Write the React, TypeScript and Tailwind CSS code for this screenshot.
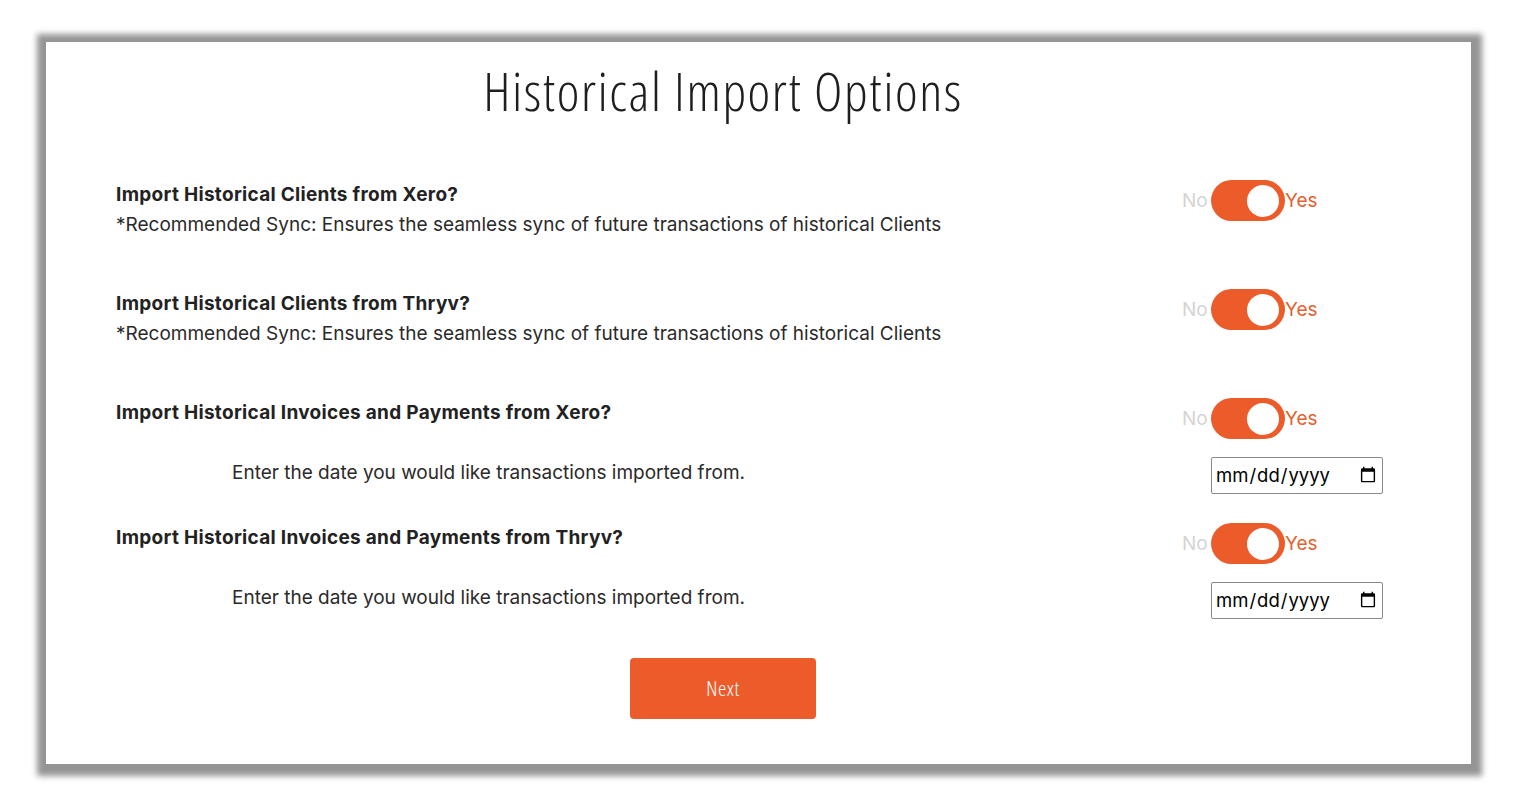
import React from 'react';

const bodyFont = "font-['Inter','Noto_Sans',sans-serif]";
const narrowFont = "font-['Open_Sans','DejaVu_Sans_Condensed',sans-serif] [font-stretch:75%]";

function Toggle() {
  return (
    <div className="flex items-center">
      <span className={`w-[30px] pl-[1px] text-[19px] leading-none text-[#d4d4d4] ${bodyFont}`}>No</span>
      <div className="flex h-[41px] w-[74px] items-center justify-end rounded-full bg-[#ec5c2b] pr-[6px]">
        <div className="h-[32px] w-[32px] rounded-full bg-white" />
      </div>
      <span className={`text-[19px] leading-none text-[#e2612f] ${bodyFont}`}>Yes</span>
    </div>
  );
}

function DateRow() {
  return (
    <div className="flex items-center justify-between">
      <p className={`-mt-[5px] pl-[116px] text-[19px] text-[#2a2a2a] ${bodyFont}`}>
        Enter the date you would like transactions imported from.
      </p>
      <div className="w-[202px] pl-[30px]">
        <input
          type="date"
          className={`h-[37px] w-[172px] rounded-[2px] border border-[#8a8a8a] px-[3px] text-[18.5px] text-black ${bodyFont}`}
        />
      </div>
    </div>
  );
}

function OptionRow({ title, note }: { title: string; note?: string }) {
  return (
    <div className="flex items-start justify-between">
      <div className={`text-[19px] leading-[30px] text-[#222] ${bodyFont}`}>
        <p className="font-bold tracking-[0.3px]">{title}</p>
        {note && <p className="text-[#2a2a2a]">{note}</p>}
      </div>
      <div className="w-[202px]">
        <Toggle />
      </div>
    </div>
  );
}

export default function App() {
  const note = '*Recommended Sync: Ensures the seamless sync of future transactions of historical Clients';
  return (
    <div className="min-h-screen bg-white pb-[44px] pl-[46px] pr-[53px] pt-[42px]">
      <div className="h-[722px] bg-white pt-[18px] shadow-[1px_2px_6px_10px_rgba(0,0,0,0.42)]">
        <h1 className={`mr-[71px] text-center text-[54px] leading-[60px] font-[350] tracking-[1.6px] text-[#1e1e1e] ${narrowFont}`}>
          Historical Import Options
        </h1>

        <div className="pl-[70px] pr-[88px]">
          <div className="mt-[60px]">
            <OptionRow title="Import Historical Clients from Xero?" note={note} />
          </div>
          <div className="mt-[49px]">
            <OptionRow title="Import Historical Clients from Thryv?" note={note} />
          </div>
          <div className="mt-[49px]">
            <OptionRow title="Import Historical Invoices and Payments from Xero?" />
          </div>
          <div className="mt-[18px]">
            <DateRow />
          </div>
          <div className="mt-[29px]">
            <OptionRow title="Import Historical Invoices and Payments from Thryv?" />
          </div>
          <div className="mt-[18px]">
            <DateRow />
          </div>
        </div>

        <div className="mr-[71px] mt-[39px] flex justify-center">
          <button
            className={`h-[61px] w-[186px] rounded-[4px] bg-[#ec5c2b] text-[21px] font-[350] tracking-[0.6px] text-white ${narrowFont}`}
          >
            Next
          </button>
        </div>
      </div>
    </div>
  );
}
